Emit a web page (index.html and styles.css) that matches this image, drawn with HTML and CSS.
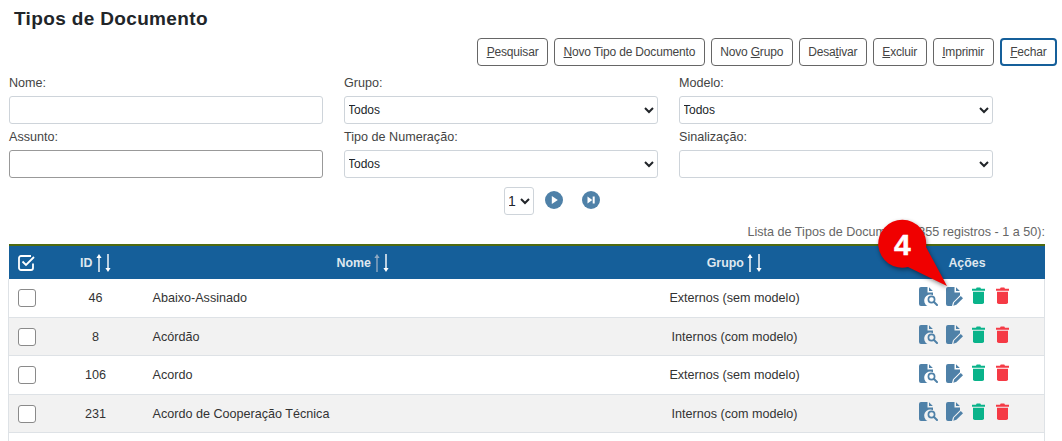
FILE: index.html
```html
<!DOCTYPE html>
<html lang="pt-BR">
<head>
    <meta charset="UTF-8">
    <title>Tipos de Documento</title>
    <link rel="stylesheet" href="styles.css">
</head>
<body>
    <svg width="0" height="0" class="defs">
        <symbol id="ico-ver" viewBox="0 0 19 19">
            <path d="M2 0h6.500v5.500H14v2.700a5.500 5.500 0 0 0-5.500 10.800H2a2 2 0 0 1-2-2V2a2 2 0 0 1 2-2z"/>
            <path d="M10 .3l3.800 3.800H10z"/>
            <circle cx="12.500" cy="12.500" r="3.100" fill="none" stroke-width="1.700"/>
            <path d="M15 15l3 3" fill="none" stroke-width="2" stroke-linecap="round"/>
        </symbol>
        <symbol id="ico-editar" viewBox="0 0 17 19">
            <path d="M2 0h6.500v5.500H14v2.800l-7 7-1 3.700H2a2 2 0 0 1-2-2V2a2 2 0 0 1 2-2z"/>
            <path d="M10 .3l3.800 3.800H10z"/>
            <path d="M7.300 18.700l.9-3.200 6.600-6.500 2.200 2.200-6.600 6.600z"/>
        </symbol>
        <symbol id="ico-lixo" viewBox="0 0 13 17">
            <path d="M0 1.800h4l.7-1.300h3.600l.7 1.300h4v2H0z"/>
            <path d="M1 4.800h11v10.400a1.800 1.800 0 0 1-1.800 1.800H2.800A1.800 1.800 0 0 1 1 15.200z"/>
        </symbol>
        <symbol id="seta-cima" viewBox="0 0 6 18">
            <path d="M3 0L5.600 4H3.700V18H2.300V4H.4z"/>
        </symbol>
        <symbol id="seta-baixo" viewBox="0 0 6 18">
            <path d="M3 18L.4 14H2.300V0H3.700V14H5.600z"/>
        </symbol>
    </svg>

    <h1 class="titulo">Tipos de Documento</h1>

    <div class="barra-botoes">
        <button class="botao"><u>P</u>esquisar</button>
        <button class="botao"><u>N</u>ovo Tipo de Documento</button>
        <button class="botao">Novo <u>G</u>rupo</button>
        <button class="botao">Desa<u>t</u>ivar</button>
        <button class="botao"><u>E</u>xcluir</button>
        <button class="botao"><u>I</u>mprimir</button>
        <button class="botao botao-foco"><u>F</u>echar</button>
    </div>

    <form class="filtros">
        <div class="campo">
            <label>Nome:</label>
            <input type="text" class="controle">
        </div>
        <div class="campo">
            <label>Grupo:</label>
            <select class="controle"><option>Todos</option></select>
        </div>
        <div class="campo">
            <label>Modelo:</label>
            <select class="controle"><option>Todos</option></select>
        </div>
        <div class="campo">
            <label>Assunto:</label>
            <input type="text" class="controle controle-escuro">
        </div>
        <div class="campo">
            <label>Tipo de Numeração:</label>
            <select class="controle"><option>Todos</option></select>
        </div>
        <div class="campo">
            <label>Sinalização:</label>
            <select class="controle"><option></option></select>
        </div>
    </form>

    <div class="paginacao">
        <select class="controle pagina"><option>1</option></select>
        <svg class="seta" viewBox="0 0 18 18"><circle cx="9" cy="9" r="9"/><path class="seta-miolo" d="M6.800 5v8l6-4z"/></svg>
        <svg class="seta" viewBox="0 0 18 18"><circle cx="9" cy="9" r="9"/><path class="seta-miolo" d="M5.500 5.500v7l4.800-3.500z"/><rect class="seta-miolo" x="10.700" y="5.500" width="2" height="7"/></svg>
    </div>

    <div class="legenda">Lista de Tipos de Documento (355 registros - 1 a 50):</div>

    <table class="tabela">
        <colgroup>
            <col class="col-check"><col class="col-id"><col class="col-nome"><col class="col-grupo"><col class="col-acoes">
        </colgroup>
        <thead>
            <tr>
                <th>
                    <svg class="check-todos" viewBox="0 0 18 18"><path d="M15 9.500V14a2 2 0 0 1-2 2H3a2 2 0 0 1-2-2V4a2 2 0 0 1 2-2h10" fill="none"/><path d="M4.500 7.500l3.500 3.500 8-8" fill="none"/></svg>
                </th>
                <th>ID <span class="ordem"><svg><use href="#seta-cima"/></svg><svg><use href="#seta-baixo"/></svg></span></th>
                <th class="th-nome">Nome <span class="ordem"><svg class="apagada"><use href="#seta-cima"/></svg><svg><use href="#seta-baixo"/></svg></span></th>
                <th>Grupo <span class="ordem"><svg><use href="#seta-cima"/></svg><svg><use href="#seta-baixo"/></svg></span></th>
                <th>Ações</th>
            </tr>
        </thead>
        <tbody>
            <tr>
                <td class="centro"><span class="caixa"></span></td>
                <td class="centro">46</td>
                <td class="nome">Abaixo-Assinado</td>
                <td class="centro">Externos (sem modelo)</td>
                <td class="acoes"><svg class="ico ver"><use href="#ico-ver"/></svg><svg class="ico editar"><use href="#ico-editar"/></svg><svg class="ico lixo verde"><use href="#ico-lixo"/></svg><svg class="ico lixo vermelho"><use href="#ico-lixo"/></svg></td>
            </tr>
            <tr>
                <td class="centro"><span class="caixa"></span></td>
                <td class="centro">8</td>
                <td class="nome">Acórdão</td>
                <td class="centro">Internos (com modelo)</td>
                <td class="acoes"><svg class="ico ver"><use href="#ico-ver"/></svg><svg class="ico editar"><use href="#ico-editar"/></svg><svg class="ico lixo verde"><use href="#ico-lixo"/></svg><svg class="ico lixo vermelho"><use href="#ico-lixo"/></svg></td>
            </tr>
            <tr>
                <td class="centro"><span class="caixa"></span></td>
                <td class="centro">106</td>
                <td class="nome">Acordo</td>
                <td class="centro">Externos (sem modelo)</td>
                <td class="acoes"><svg class="ico ver"><use href="#ico-ver"/></svg><svg class="ico editar"><use href="#ico-editar"/></svg><svg class="ico lixo verde"><use href="#ico-lixo"/></svg><svg class="ico lixo vermelho"><use href="#ico-lixo"/></svg></td>
            </tr>
            <tr>
                <td class="centro"><span class="caixa"></span></td>
                <td class="centro">231</td>
                <td class="nome">Acordo de Cooperação Técnica</td>
                <td class="centro">Internos (com modelo)</td>
                <td class="acoes"><svg class="ico ver"><use href="#ico-ver"/></svg><svg class="ico editar"><use href="#ico-editar"/></svg><svg class="ico lixo verde"><use href="#ico-lixo"/></svg><svg class="ico lixo vermelho"><use href="#ico-lixo"/></svg></td>
            </tr>
            <tr>
                <td class="centro"><span class="caixa"></span></td>
                <td class="centro"></td>
                <td class="nome"></td>
                <td class="centro"></td>
                <td class="acoes"><svg class="ico ver"><use href="#ico-ver"/></svg><svg class="ico editar"><use href="#ico-editar"/></svg><svg class="ico lixo verde"><use href="#ico-lixo"/></svg><svg class="ico lixo vermelho"><use href="#ico-lixo"/></svg></td>
            </tr>
        </tbody>
    </table>

    <!-- marcador do tutorial por cima da tabela -->
    <div class="marcador">
        <svg class="marcador-forma" viewBox="0 0 72 72">
            <path d="M48 29L69 68 30 49A24 24 0 1 1 48 29z"/>
        </svg>
        <span class="marcador-num">4</span>
    </div>
</body>
</html>
```

FILE: styles.css
```css
html, body {
    height: 441px;
    overflow: hidden;
}

body {
    position: relative;
    margin: 0;
    font-family: 'Liberation Sans', Arial, sans-serif;
    font-size: 12.6px;
    color: #212529;
    background-color: #fff;
}

.defs {
    position: absolute;
}

.titulo {
    margin: 0;
    padding: 8px 0 0 14px;
    font-size: 19px;
    line-height: 21px;
    font-weight: bold;
    letter-spacing: 0.35px;
}

.barra-botoes {
    display: flex;
    justify-content: flex-end;
    gap: 6px;
    padding: 9px 5px 0 0;
}

.botao {
    height: 28px;
    padding: 0 8.5px;
    font-family: inherit;
    font-size: 12px;
    letter-spacing: -0.17px;
    color: #444;
    background-color: #fff;
    border: 1px solid #666;
    border-radius: 4px;
}

.botao-foco {
    border: 2px solid #155f9a;
}

.filtros {
    display: grid;
    grid-template-columns: repeat(3, 314px);
    column-gap: 21px;
    row-gap: 4px;
    padding: 8px 0 0 9px;
}

.campo label {
    display: block;
    height: 22px;
    line-height: 18px;
    color: #444;
}

.controle {
    display: block;
    box-sizing: border-box;
    width: 100%;
    height: 28px;
    padding: 0;
    text-indent: -1px;
    font-family: inherit;
    font-size: 12px;
    color: #212529;
    background-color: #fff;
    border: 1px solid #ced4da;
    border-radius: 3px;
}

.controle-escuro {
    border-color: #999;
}

.paginacao {
    display: flex;
    align-items: center;
    gap: 19px;
    height: 28px;
    margin-top: 9px;
    padding-left: 504px;
}

.pagina {
    width: 30px;
    margin-right: -8px;
    font-size: 14px;
}

.seta {
    width: 18px;
    height: 18px;
    margin-bottom: 3px;
    fill: #4f81a8;
}

.seta-miolo {
    fill: #fff;
}

.legenda {
    padding: 9px 17px 0 0;
    height: 20px;
    line-height: 16px;
    text-align: right;
    color: #666;
}

.tabela {
    width: 1036px;
    margin-left: 8px;
    table-layout: fixed;
    border-collapse: collapse;
    border-top: 2px solid #4f6a10;
}

.col-check { width: 39px; }
.col-id { width: 96px; }
.col-nome { width: 436px; }
.col-grupo { width: 310px; }
.col-acoes { width: 155px; }

.tabela th {
    height: 33px;
    padding: 0;
    font-size: 12.4px;
    color: #dfe7ef;
    background-color: #155f9a;
}

.tabela .th-nome {
    padding-left: 3px;
}

.check-todos {
    display: block;
    width: 18px;
    height: 18px;
    margin-left: 9px;
    stroke: #fff;
    stroke-width: 1.800;
}

.ordem {
    display: inline-flex;
    gap: 3px;
    vertical-align: -5px;
}

.ordem svg {
    width: 6px;
    height: 18px;
    fill: #fff;
}

.ordem .apagada {
    fill: #8fa9c2;
}

.tabela td {
    height: 36.5px;
    padding: 1px 0 0;
    color: #333;
    border-bottom: 1px solid #dee2e6;
}

.tabela tbody tr {
    border-left: 1px solid #dee2e6;
    border-right: 1px solid #dee2e6;
}

.tabela tbody tr:nth-child(even) td {
    background-color: #f2f2f2;
}

.centro {
    text-align: center;
}

.tabela .nome {
    padding-left: 9px;
}

.caixa {
    display: block;
    box-sizing: border-box;
    width: 18px;
    height: 18px;
    margin-left: 9px;
    background-color: #fff;
    border: 1px solid #8a8a8a;
    border-radius: 3px;
}

.tabela .acoes {
    padding-left: 29px;
    font-size: 0;
    white-space: nowrap;
}

.ico {
    display: inline-block;
    vertical-align: middle;
    margin-bottom: 4px;
}

.ver {
    width: 19px;
    height: 19px;
    margin-right: 8px;
    fill: #4f81a8;
    stroke: #4f81a8;
    stroke-width: 0;
}

.editar {
    width: 17px;
    height: 19px;
    margin-right: 9px;
    fill: #4f81a8;
}

.lixo {
    width: 13px;
    height: 17px;
    margin-bottom: 5px;
}

.verde {
    margin-right: 11px;
    fill: #09b38a;
}

.vermelho {
    fill: #f53a45;
}

.marcador {
    position: absolute;
    left: 878px;
    top: 218px;
    width: 72px;
    height: 72px;
}

.marcador-forma {
    display: block;
    width: 72px;
    height: 72px;
    fill: #f00000;
    filter: drop-shadow(1px 2px 2px rgba(0, 0, 0, 0.45));
}

.marcador-num {
    position: absolute;
    left: 16px;
    top: 9px;
    font-size: 30px;
    line-height: 36px;
    font-weight: bold;
    color: #fff;
    -webkit-text-stroke: 0.5px #fff;
}
```
